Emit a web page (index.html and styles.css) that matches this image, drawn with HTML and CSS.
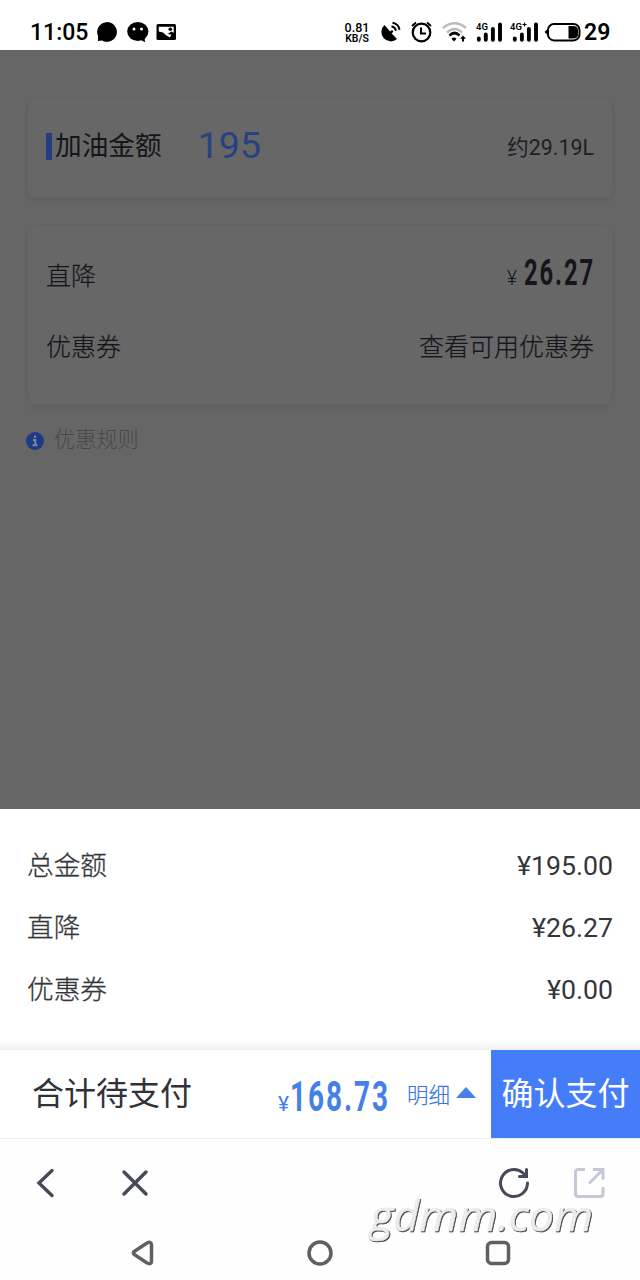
FILE: index.html
```html
<!DOCTYPE html>
<html lang="zh-CN">
<head>
<meta charset="utf-8">
<title>加油支付</title>
<link rel="stylesheet" href="styles.css">
</head>
<body>
<div class="phone">
  <header class="status">
    <span class="clock">11:05</span>
    <svg class="status-left" width="82" height="24" viewBox="0 0 82 24">
      <path d="M2 21V16A9.900 9.900 0 1 1 6 20.500Z"/>
      <ellipse cx="41.800" cy="11.500" rx="10.600" ry="9.500"/>
      <path d="M43 19l6 3.200-.500-5z"/>
      <circle cx="38" cy="9" r="1.500" fill="#fff"/><circle cx="45.500" cy="9" r="1.500" fill="#fff"/>
      <rect x="60.500" y="4" width="19.500" height="16" rx="1.500"/>
      <path d="M62.800 6.800H77.700V12.500L75.500 14 74 17.500 70.500 15.500 67 12.500 62.800 11.500z" fill="#fff"/>
      <circle cx="74.300" cy="9.300" r="1.800"/>
      <path d="M71.500 14L75.500 11.500 77.700 13V15z"/>
    </svg>
    <div class="speed"><span>0.81</span><span>KB/S</span></div>
    <svg class="status-right" width="204" height="24" viewBox="0 0 204 24">
      <path d="M5.500 5A9 9 0 1 0 18 19L12.700 13.600 14.500 11.500 13 10 11 11.500Z"/>
      <path d="M12.500 6.300a6 6 0 0 1 4.500 4.500M13.500 2.800a8.500 8.500 0 0 1 7 7" fill="none" stroke="#000" stroke-width="1.900"/>
      <g fill="none" stroke="#000">
        <circle cx="42.500" cy="12.500" r="8.800" stroke-width="2.200"/>
        <path d="M42 7.500V13.500H47" stroke-width="2"/>
        <path d="M33 6 37 2.500M52 6 48 2.500" stroke-width="1.800"/>
        <path d="M64 8Q75.500-1.500 87 8M68 12.500Q75.500 5.500 83 12.500" stroke="#bbb" stroke-width="2.400"/>
        <path d="M70.500 15.500Q75.500 10.500 80.500 15.500" stroke-width="2.600"/>
      </g>
      <path d="M72.500 18.700Q75 16.500 77.500 18.700L75 21.500Z"/>
      <path d="M84 15.500l-3 3.200h2V21.500h2v-2.800h2z"/>
      <path d="M99.800 18.500v1.300M106.800 14.500v5.300M113.900 9v10.800M121 4.500v15.300M135.800 18.500v1.300M142.900 14.500v5.300M149.900 9v10.800M157 4.500v15.300" stroke="#000" stroke-width="3.900" stroke-linecap="round"/>
      <text x="97" y="10" class="net">4G</text><text x="131" y="10" class="net">4G</text>
      <path d="M143.500 4.500h4M145.500 2.500v4" stroke="#000" stroke-width="1.100"/>
      <rect x="169" y="4" width="31.500" height="16.400" rx="6" fill="none" stroke="#000" stroke-width="2"/>
      <path d="M169 8.500 165.500 12l3.500 3.500z"/>
      <path d="M189.500 6h4.500q5 0 5 4v4.500q0 4-5 4H189.500z"/>
    </svg>
    <span class="battery">29</span>
  </header>

  <main class="page">
    <section class="card card-amount">
      <i class="mark"></i>
      <span class="card-title">加油金额</span>
      <span class="fuel">195</span>
      <span class="litres">约29.19L</span>
    </section>
    <section class="card card-discount">
      <div class="row">
        <span>直降</span>
        <svg class="din" width="94" height="48" viewBox="0 0 94 48">
          <text x="2" y="30" font-size="20" textLength="10" lengthAdjust="spacingAndGlyphs">¥</text>
          <text x="19" y="30" font-size="37.500" font-weight="700" letter-spacing="3" textLength="71" lengthAdjust="spacingAndGlyphs">26.27</text>
        </svg>
      </div>
      <div class="row">
        <span>优惠券</span><span>查看可用优惠券</span>
      </div>
    </section>
    <div class="rules">
      <svg width="18" height="18" viewBox="0 0 18 18"><circle cx="9" cy="9" r="9" fill="#1f3b88"/><path d="M9 3.500v2.500M7 8h2.300v5M6.500 13.200h5" fill="none" stroke="#7f8694" stroke-width="2"/></svg>
      <span>优惠规则</span>
    </div>
  </main>

  <section class="sheet">
    <div class="line"><span>总金额</span><span>¥195.00</span></div>
    <div class="line"><span>直降</span><span>¥26.27</span></div>
    <div class="line"><span>优惠券</span><span>¥0.00</span></div>
  </section>

  <section class="paybar">
    <span class="total-label">合计待支付</span>
    <svg class="total" width="116" height="54" viewBox="0 0 116 54">
      <text x="1" y="36" font-size="20" textLength="11" lengthAdjust="spacingAndGlyphs">¥</text>
      <text x="13" y="36" font-size="42.500" font-weight="700" letter-spacing="3" textLength="100" lengthAdjust="spacingAndGlyphs">168.73</text>
    </svg>
    <span class="detail">明细</span>
    <i class="caret"></i>
    <button class="confirm">确认支付</button>
  </section>

  <nav class="tools">
    <svg width="18" height="30" viewBox="0 0 18 30"><path d="M16 2.500 3 15 16 27.500"/></svg>
    <svg class="close" width="26" height="26" viewBox="0 0 26 26"><path d="M2 2 24 24M24 2 2 24"/></svg>
    <svg class="reload" width="32" height="32" viewBox="0 0 32 32"><path d="M29.500 16A13.500 13.500 0 1 1 25 6L28 9M28.500 2.500V9.500H21.500"/></svg>
    <svg class="share" width="32" height="32" viewBox="0 0 32 32"><path d="M12 2.500H5.500Q2.500 2.500 2.500 5.500V26.500Q2.500 29.500 5.500 29.500H27Q30 29.500 30 26.500V20M20 2.500H30V12.500M29.500 3 16 16.500"/></svg>
  </nav>
  <nav class="system">
    <svg width="24" height="28" viewBox="0 0 24 28"><path d="M3.200 12.500 16 4Q20.500 2 20.500 6V22Q20.500 26 16 24L3.200 15.500Q1.700 14 3.200 12.500Z"/></svg>
    <svg width="26" height="26" viewBox="0 0 26 26"><circle cx="13" cy="13" r="11"/></svg>
    <svg width="26" height="26" viewBox="0 0 26 26"><rect x="2.500" y="2.500" width="21" height="21" rx="4"/></svg>
  </nav>
  <svg class="watermark" width="240" height="60" viewBox="0 0 240 60"><text x="7" y="45" textLength="223" lengthAdjust="spacingAndGlyphs">gdmm.com</text></svg>
</div>
</body>
</html>
```
FILE: styles.css
```css
* { box-sizing: border-box; }
body { margin: 0; font-family: Roboto, "Noto Sans CJK SC", sans-serif; }
svg { display: block; flex: none; overflow: visible; }
span { white-space: nowrap; }
.phone { position: relative; width: 640px; height: 1280px; background: #fefefe; overflow: hidden; }

.status { display: flex; height: 50px; padding: 20px 0 0 30px; color: #000; background: #fff; }
.clock { width: 66px; font-size: 23px; line-height: 25px; font-weight: 500; }
.speed { display: flex; flex-direction: column; width: 30px; margin-left: 164px; align-items: center; font-size: 12.5px; line-height: 11px; padding-top: 2px; font-weight: 500; }
.speed span + span { font-size: 10.5px; line-height: 11px; font-weight: 600; }
.status-right { margin-left: 7px; }
.net { font: 600 9.5px Roboto, sans-serif; }
.battery { font-size: 23px; line-height: 25px; font-weight: 600; margin-left: 1px; }

.page { height: 759px; padding: 49px 28px 0; background: #666; color: #15151b; }
.card { border-radius: 8px; background: #676767; box-shadow: 0 2px 5px 1px #616161; }
.card-amount { display: flex; height: 99px; padding: 0 18px; }
.mark { width: 6px; height: 27px; margin-top: 34px; background: #263c80; }
.card-title { margin-left: 3px; font-size: 26.7px; line-height: 94px; font-weight: 400; }
.fuel { margin-left: 36px; font-size: 37.5px; line-height: 92px; color: #26427f; }
.litres { margin-left: auto; font-size: 21.4px; line-height: 98px; font-weight: 400; color: #202024; }
.card-discount { height: 178px; margin-top: 28px; padding: 13px 18px; }
.row { display: flex; justify-content: space-between; height: 71px; font-size: 25px; line-height: 76px; font-weight: 300; }
.row span { -webkit-text-stroke: .2px #15151b; }
.din { margin: 16px -5px 0 0; }
.din text { fill: #15151b; }
.rules { display: flex; align-items: center; height: 32px; margin: 20px 0 0 -2px; gap: 10px; font-size: 21.2px; line-height: 28px; font-weight: 300; color: #484848; }
.rules svg { margin-top: 1px; }
.rules span { margin-top: 0; }

.sheet { height: 241px; padding: 24px 27px; background: linear-gradient(#fff 232px, #efefef 241px); color: #34363c; }
.line { display: flex; justify-content: space-between; height: 62px; font-size: 26.7px; line-height: 66px; }
.line span:first-child { font-weight: 300; -webkit-text-stroke: .3px #34363c; }
.paybar { display: flex; height: 89px; background: #fff; color: #303238; border-bottom: 1px solid #ececec; }
.total-label { width: 244px; padding-left: 32px; font-size: 32px; line-height: 89px; font-weight: 400; }
.total { margin: 25px 0 0 33px; fill: #4580e7; }
.detail { margin-left: 14px; font-size: 21.5px; line-height: 92px; height: 88px; font-weight: 300; color: #3c78dc; -webkit-text-stroke: .2px #3c78dc; }
.caret { width: 20px; height: 11px; margin: 37px 0 0 6px; background: #4580e7; clip-path: polygon(50% 0, 100% 100%, 0 100%); }
.confirm { width: 149px; height: 88px; margin-left: auto; padding: 0 0 7px; border: 0; background: #457df8; color: #fff; font: 400 32px "Noto Sans CJK SC", sans-serif; white-space: nowrap; }

.tools { display: flex; align-items: center; height: 88px; padding: 0 35px 0 36px; fill: none; stroke: #454958; stroke-width: 3.4; stroke-linecap: round; }
.close { margin-left: 68px; }
.reload { margin-left: auto; stroke-width: 3; }
.share { margin-left: 43px; stroke: #c4c7d6; stroke-linecap: butt; stroke-width: 3; }
.system { display: flex; justify-content: space-between; align-items: center; height: 52px; padding: 0 129px 0 131px; fill: none; stroke: #606060; stroke-width: 3.5; }
.watermark { position: absolute; left: 363px; top: 1186px; font: italic 400 42px "Open Sans", sans-serif; fill: #ececec; stroke: #ececec; stroke-width: .5; filter: drop-shadow(1px 1px .4px #444); }
```
